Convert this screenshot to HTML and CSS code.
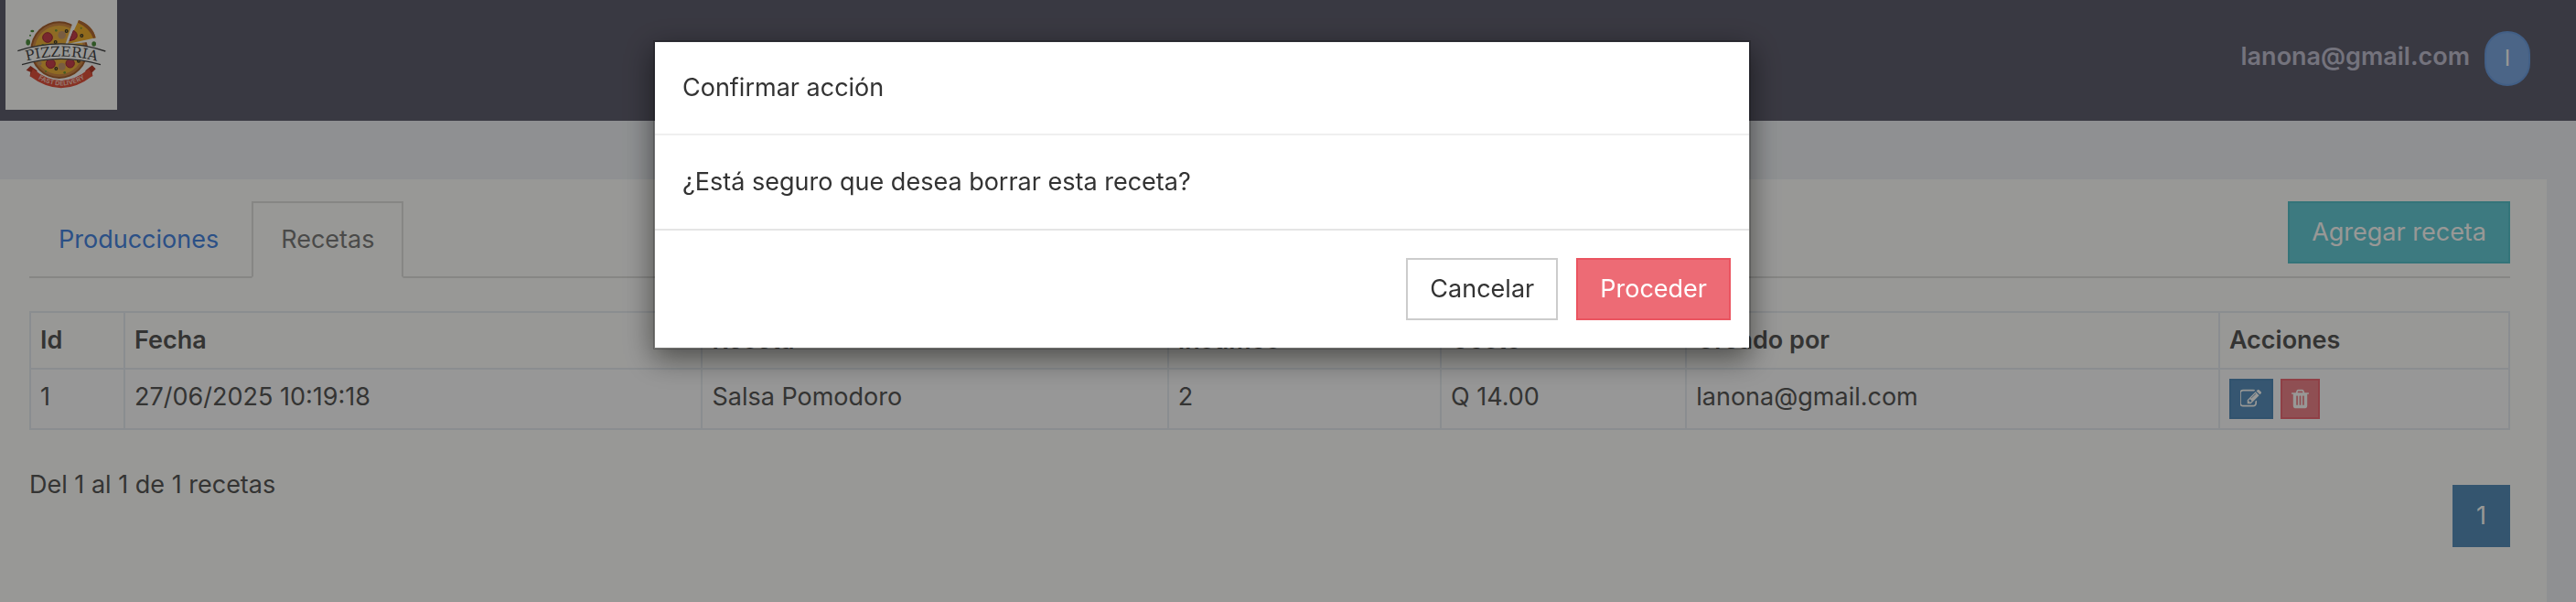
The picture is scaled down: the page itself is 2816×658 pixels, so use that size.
FILE: index.html
```html
<!DOCTYPE html>
<html lang="es">
  <head>
    <meta charset="UTF-8" />
    <meta name="viewport" content="width=device-width, initial-scale=1.0" />
    <title>Recetas</title>
    <link rel="stylesheet" href="styles.css">
  </head>
  <body>
    <header class="navbar">
      <a href="#" class="logo" aria-label="Pizzeria">
        <svg viewBox="18 0 366 360" role="img" aria-hidden="true">
          <rect x="18" width="366" height="360" fill="#fefefb" />
          <!-- Pizza -->
          <circle cx="194" cy="164" r="94" fill="#a9622f" />
          <circle cx="194" cy="164" r="88" fill="#d08a48" />
          <circle cx="194" cy="164" r="80" fill="#efb23c" />
          <path d="M214 146L242 64L324 60L320 134Z" fill="#fefefb" />
          <path d="M222 144L258 66Q304 84 314 124Z" fill="#f2b130" />
          <path d="M258 66Q304 82 314 124L306 126Q294 92 255 74Z" fill="#b56c35" />
          <g fill="#c9414d" stroke="#a12c3a" stroke-width="3">
            <circle cx="156" cy="123" r="16" />
            <circle cx="166" cy="209" r="15" />
            <circle cx="230" cy="208" r="14" />
            <path d="M241 100Q256 108 252 122Q246 132 228 134Z" />
          </g>
          <g fill="#c99b6e">
            <circle cx="203" cy="115" r="13" />
            <circle cx="203" cy="218" r="12" />
            <circle cx="130" cy="208" r="7" />
          </g>
          <g fill="none" stroke="#3b3a2d" stroke-width="4">
            <circle cx="218" cy="102" r="4" />
            <circle cx="268" cy="117" r="4" />
            <circle cx="182" cy="138" r="4" />
            <circle cx="184" cy="225" r="4" />
            <circle cx="258" cy="200" r="4" />
          </g>
          <g fill="#6f9a3c">
            <circle cx="184" cy="100" r="4" />
            <circle cx="140" cy="148" r="4" />
            <circle cx="212" cy="238" r="4" />
            <circle cx="150" cy="234" r="3" />
            <circle cx="266" cy="92" r="3" />
          </g>
          <g fill="#4f8f3e">
            <ellipse cx="92" cy="139" rx="7" ry="10" />
            <ellipse cx="106" cy="102" rx="6" ry="4" />
            <ellipse cx="308" cy="144" rx="7" ry="8" />
            <circle cx="99" cy="116" r="3" />
          </g>
          <!-- Name band -->
          <path d="M58 166Q202 122 346 168L328 212Q200 176 72 212Z" fill="#fefefb" />
          <path d="M58 167Q202 120 346 168M72 212Q200 174 330 212" fill="none" stroke="#474747" stroke-width="4" />
          <path id="nameArc" d="M66 206Q200 164 338 206" fill="none" />
          <text class="logo-name"><textPath href="#nameArc" startOffset="50%">PIZZERIA</textPath></text>
          <!-- Ribbon -->
          <path d="M86 230L100 216L122 232L116 252L98 250L100 236ZM314 226L302 214L280 232L286 252L304 250L302 238Z" fill="#b53c2a" />
          <path d="M108 226Q200 302 292 226L304 248Q202 328 98 250Z" fill="#e2523c" />
          <path id="ribbonArc" d="M106 246Q202 316 298 244" fill="none" />
          <text class="logo-ribbon"><textPath href="#ribbonArc" startOffset="50%">FAST DELIVERY</textPath></text>
        </svg>
      </a>
      <div class="user">
        <span class="user-email">lanona@gmail.com</span>
        <button type="button" class="avatar">I</button>
      </div>
    </header>

    <main class="panel">
      <div class="tabs-bar">
        <nav class="tabs">
          <a href="#" class="tab">Producciones</a>
          <a href="#" class="tab active">Recetas</a>
        </nav>
        <button type="button" class="btn btn-info">Agregar receta</button>
      </div>

      <table>
        <colgroup>
          <col class="col-id" />
          <col class="col-date" />
          <col class="col-recipe" />
          <col class="col-supplies" />
          <col class="col-cost" />
          <col class="col-author" />
          <col class="col-actions" />
        </colgroup>
        <thead>
          <tr>
            <th>Id</th>
            <th>Fecha</th>
            <th>Receta</th>
            <th>Insumos</th>
            <th>Costo</th>
            <th>Creado por</th>
            <th>Acciones</th>
          </tr>
        </thead>
        <tbody>
          <tr>
            <td>1</td>
            <td>27/06/2025 10:19:18</td>
            <td>Salsa Pomodoro</td>
            <td>2</td>
            <td>Q 14.00</td>
            <td>lanona@gmail.com</td>
            <td>
              <div class="actions">
                <button type="button" class="btn-icon btn-edit" aria-label="Editar">
                  <svg width="24" height="24" viewBox="64 0 1792 1792" fill="currentColor">
                    <path d="M888 1184l116-116-152-152-116 116v56h96v96h56zm440-720q-16-16-33 1l-350 350q-17 17-1 33t33-1l350-350q17-17 1-33zm80 594v190q0 119-84.5 203.5t-203.5 84.5h-832q-119 0-203.5-84.5t-84.5-203.5v-832q0-119 84.5-203.5t203.5-84.5h832q63 0 117 25 15 7 18 23 3 17-9 29l-49 49q-14 14-32 8-23-6-45-6h-832q-66 0-113 47t-47 113v832q0 66 47 113t113 47h832q66 0 113-47t47-113v-126q0-13 9-22l64-64q15-15 35-7t20 29zm-96-738l288 288-672 672h-288v-288zm444 132l-92 92-288-288 92-92q28-28 68-28t68 28l152 152q28 28 28 68t-28 68z" />
                  </svg>
                </button>
                <button type="button" class="btn-icon btn-delete" aria-label="Borrar">
                  <svg width="19" height="24" viewBox="192 0 1408 1792" fill="currentColor">
                    <path d="M704 1376v-704q0-14-9-23t-23-9h-64q-14 0-23 9t-9 23v704q0 14 9 23t23 9h64q14 0 23-9t9-23zm256 0v-704q0-14-9-23t-23-9h-64q-14 0-23 9t-9 23v704q0 14 9 23t23 9h64q14 0 23-9t9-23zm256 0v-704q0-14-9-23t-23-9h-64q-14 0-23 9t-9 23v704q0 14 9 23t23 9h64q14 0 23-9t9-23zm-544-992h448l-48-117q-7-9-17-11h-317q-10 2-17 11zm928 32v64q0 14-9 23t-23 9h-96v948q0 83-47 143.5t-113 60.5h-832q-66 0-113-58.5t-47-141.5v-952h-96q-14 0-23-9t-9-23v-64q0-14 9-23t23-9h309l70-167q15-37 54-63t79-26h320q40 0 79 26t54 63l70 167h309q14 0 23 9t9 23z" />
                  </svg>
                </button>
              </div>
            </td>
          </tr>
        </tbody>
      </table>

      <div class="table-footer">
        <span>Del 1 al 1 de 1 recetas</span>
        <a href="#" class="page-link">1</a>
      </div>
    </main>

    <!-- Confirm dialog -->
    <div class="modal-backdrop">
      <div class="modal" role="dialog" aria-modal="true" aria-labelledby="modalTitle">
        <div class="modal-header" id="modalTitle">Confirmar acción</div>
        <div class="modal-body">¿Está seguro que desea borrar esta receta?</div>
        <div class="modal-footer">
          <button type="button" class="btn btn-default">Cancelar</button>
          <button type="button" class="btn btn-danger">Proceder</button>
        </div>
      </div>
    </div>
  </body>
</html>
```

FILE: styles.css
```css
* {
  box-sizing: border-box;
}

body {
  display: flex;
  flex-direction: column;
  min-height: 100vh;
  margin: 0;
  background: #eef1f4;
  color: #575756;
  font-family: Inter, "Liberation Sans", sans-serif;
  font-size: 27px;
  line-height: 40px;
}

button {
  font: inherit;
  cursor: pointer;
}

a {
  text-decoration: none;
}

.navbar {
  display: flex;
  justify-content: space-between;
  height: 132px;
  padding: 0 50px 0 6px;
  background: #605f6e;
}

.logo svg {
  display: block;
  width: 122px;
  height: 120px;
}

.logo-name {
  fill: #474747;
  font-family: "DejaVu Serif", serif;
  font-size: 46px;
  text-anchor: middle;
}

.logo-ribbon {
  fill: #f6c9bd;
  font-size: 21px;
  font-weight: bold;
  text-anchor: middle;
}

.user {
  display: flex;
  align-items: center;
  gap: 16px;
  height: 128px;
}

.user-email {
  padding-bottom: 4px;
  color: #c1c0d0;
  font-weight: 600;
}

.avatar {
  width: 50px;
  height: 60px;
  padding: 0;
  border: 2px solid #6e9fdf;
  border-radius: 25px;
  background: #7da8e1;
  color: #fefefb;
  font-size: 24px;
}

.panel {
  flex: 1;
  margin: 64px 32px 0 0;
  padding: 24px 40px 40px 32px;
  background: #fefefb;
}

.tabs-bar {
  display: flex;
  justify-content: space-between;
  align-items: flex-start;
  margin-bottom: 36px;
  border-bottom: 2px solid #dfdfdc;
}

.tabs {
  display: flex;
  gap: 4px;
  margin-bottom: -2px;
}

.tab {
  padding: 20px 30px;
  border: 2px solid transparent;
  color: #4886df;
}

.tab.active {
  border-color: #dfdfdc;
  border-bottom-color: #fefefb;
  color: #7c7c7a;
}

.btn {
  padding: 12px 24px;
  border: 2px solid;
}

.btn-info {
  border-color: #58c1ca;
  background: #67cbd5;
  color: #fefefb;
}

.btn-default {
  border-color: #ccc;
  background: #fff;
  color: #333;
}

.btn-danger {
  border-color: #ea5460;
  background: #ed6b75;
  color: #fff;
}

table {
  width: 100%;
  table-layout: fixed;
  border-collapse: collapse;
}

.col-id {
  width: 3.8%;
}

.col-date {
  width: 23.3%;
}

.col-recipe {
  width: 18.8%;
}

.col-supplies {
  width: 11%;
}

.col-cost {
  width: 9.9%;
}

.col-author {
  width: 21.5%;
}

.col-actions {
  width: 11.7%;
}

th,
td {
  padding: 10px;
  border: 2px solid #e7ecf0;
  text-align: left;
  vertical-align: top;
}

th {
  font-weight: 600;
}

tbody tr {
  background: #fcfcfc;
}

.actions {
  display: flex;
  gap: 8px;
}

.btn-icon {
  display: flex;
  align-items: center;
  height: 44px;
  padding: 0 10px;
  border: 2px solid;
  color: #fefefb;
}

.btn-edit {
  border-color: #528ab8;
  background: #5a90bc;
}

.btn-delete {
  border-color: #ee6c75;
  background: #ee848a;
}

.table-footer {
  display: flex;
  justify-content: space-between;
  align-items: flex-start;
  margin-top: 40px;
}

.page-link {
  margin-top: 20px;
  padding: 14px 26px;
  background: #578eb9;
  color: #fefefb;
}

.modal-backdrop {
  position: fixed;
  inset: 0;
  display: flex;
  justify-content: center;
  align-items: flex-start;
  padding: 44px 188px 0 0;
  background: rgba(0, 0, 0, 0.4);
}

.modal {
  width: 1200px;
  max-width: 100%;
  border: 2px solid rgba(0, 0, 0, 0.2);
  background: #fff;
  background-clip: padding-box;
  box-shadow: 0 10px 30px rgba(0, 0, 0, 0.5);
  color: #333;
}

.modal-header {
  padding: 30px;
  border-bottom: 2px solid #efefef;
}

.modal-body {
  padding: 30px;
  line-height: 42px;
}

.modal-footer {
  display: flex;
  justify-content: flex-end;
  gap: 20px;
  padding: 30px 20px;
  border-top: 2px solid #e5e5e5;
}
```
